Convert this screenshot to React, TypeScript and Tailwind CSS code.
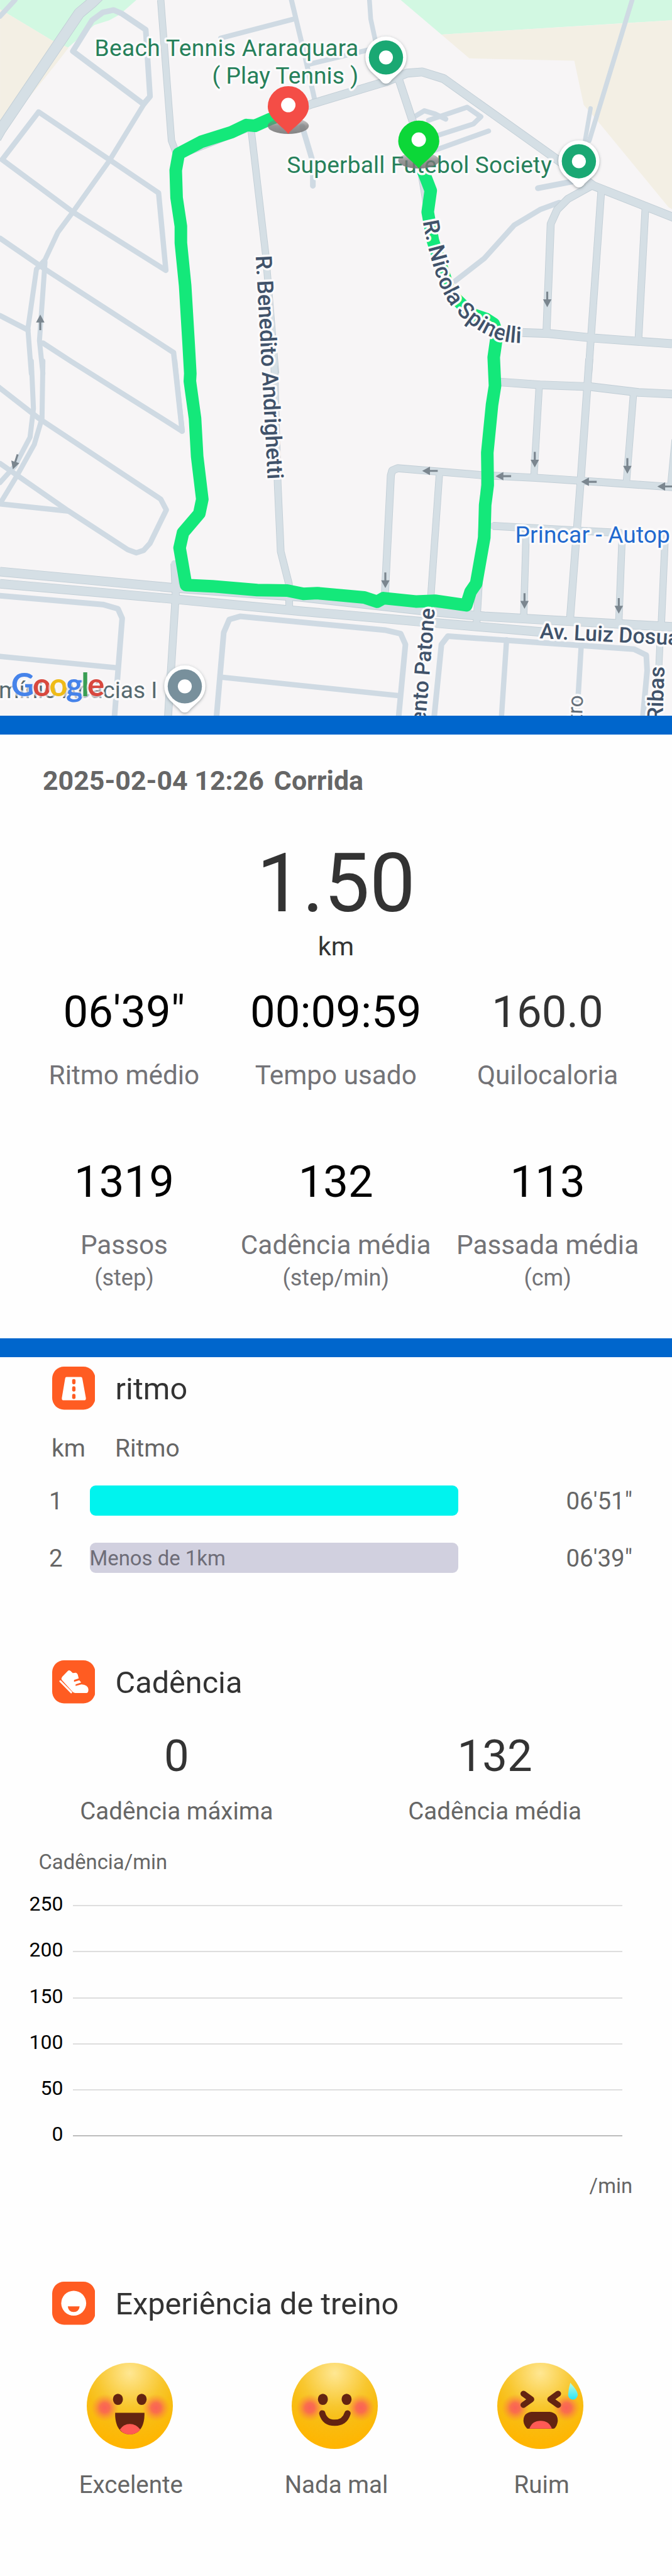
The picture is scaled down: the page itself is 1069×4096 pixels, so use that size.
import React from "react";

const MINOR = "#cfdae3";
const MAIN = "#d5dfe5";
const CASING = "#c2ced6";

type Road = { p: string; w: number };

const upperMinor: Road[] = [
  { p: "215,85 240,52 265,42 285,58 340,125 350,405 335,437 170,215 215,85", w: 9 },
  { p: "340,425 255,675 170,890 135,975 105,1090 85,1130 65,1380 73,1568", w: 8 },
  { p: "105,1100 92,1430 100,1568", w: 8 },
  { p: "90,470 255,670 370,810 387,1135 170,890 5,670 90,470", w: 8.5 },
  { p: "0,1000 105,1130 405,1480 425,1810", w: 8.5 },
  { p: "0,1325 65,1385", w: 8.5 },
  { p: "100,1440 165,1516 425,1810", w: 8.5 },
  { p: "35,0 0,68", w: 8 },
  { p: "680,0 712,240 735,425", w: 8 },
  { p: "515,160 685,80", w: 8 },
  { p: "720,270 870,205", w: 8 },
  { p: "862,0 865,80 877,180", w: 7.5 },
  { p: "965,492 990,465 1015,478 1040,500", w: 8 },
  { p: "1000,505 1090,450 1122,490 1105,520 1010,575", w: 8 },
  { p: "1000,640 1140,550", w: 8 },
  { p: "705,530 730,680 730,780", w: 9 },
  { p: "1475,0 1375,590", w: 7.5 },
  { p: "1378,455 1365,590", w: 7 },
  { p: "1255,790 1350,757", w: 9 },
  { p: "1305,850 1260,880 1200,945 1130,1085 1062,1180", w: 8.5 },
];
const upperMain: Road[] = [
  { p: "232,-20 215,10 185,55 0,548 -10,580", w: 18 },
  { p: "375,0 400,590 415,660", w: 11.5 },
  { p: "585,530 620,1070 643,1568", w: 11.5 },
  { p: "930,330 965,520 1000,900", w: 13 },
  { p: "1380,780 1325,835 1300,880 1285,940 1275,1400", w: 12.5 },
  { p: "1403,800 1373,1568", w: 12 },
  { p: "1506,870 1490,1415", w: 12 },
  { p: "1150,1392 1280,1400 1390,1420 1568,1443", w: 14 },
  { p: "415,650 585,530 730,435 900,343 950,307 985,302 1035,330 1300,670 1385,780 1575,915", w: 14 },
];
const lowerMinor: Road[] = [
  { p: "-10,100 90,240 375,580 388,625 350,765 335,795 318,805 298,792 160,630 0,430", w: 8.5 },
  { p: "73,0 78,200 70,320 35,440 0,510", w: 8 },
  { p: "100,0 98,240 80,350 40,480 3,590", w: 8 },
  { p: "408,0 425,290", w: 8 },
  { p: "0,600 160,630", w: 8.5 },
  { p: "0,985 240,1022 275,1040 285,1080 267,1495", w: 9 },
  { p: "0,1240 275,1288", w: 8.5 },
  { p: "505,1495 522,1140 535,1085 560,1072 900,1130 935,1145 946,1190 930,1495", w: 9 },
  { p: "520,1328 932,1405", w: 8.5 },
  { p: "1013,1495 1030,1190 1045,1155 1480,1210 1508,1235 1510,1300 1500,1495", w: 9 },
  { p: "1182,1170 1170,1495", w: 8.5 },
  { p: "1356,1200 1346,1495", w: 8.5 },
];
const lowerMain: Road[] = [
  { p: "640,20 648,520 655,800 674,935 675,1035", w: 12 },
  { p: "1165,88 1260,100 1380,108 1490,132 1575,139", w: 13.5 },
  { p: "1258,110 1246,480", w: 11.5 },
  { p: "1478,140 1462,500", w: 11.5 },
  { p: "1575,330 1565,520", w: 11 },
  { p: "898,985 912,480 915,460 928,450 1130,480 1250,490 1400,508 1575,530", w: 12.5 },
  { p: "1025,480 1005,995", w: 11.5 },
  { p: "1132,480 1112,1100", w: 12 },
  { p: "1150,692 1450,722", w: 12.5 },
  { p: "1228,700 1222,1070", w: 11.5 },
  { p: "1452,720 1444,1090", w: 11.5 },
  { p: "1552,740 1543,1110", w: 11.5 },
  { p: "1540,1180 1532,1495", w: 11 },
  { p: "0,884 410,953 700,990 1000,1050 1130,1072 1575,1117", w: 15 },
  { p: "0,935 410,1000 700,1050 1050,1105 1300,1143", w: 15 },
  { p: "407,850 410,980 392,1495", w: 12.5 },
  { p: "1375,-10 1355,500 1330,1085", w: 12.5 },
];

const ROUTE =
  "M665,478 L630,500 595,528 575,525 540,555 470,595 417,645 410,715 412,830 422,950 422,1020 432,1200 440,1440 444,1568 443,1600 455,1756 460,1916 472,2096 465,2156 427,2236 419,2300 434,2456 495,2461 600,2477 670,2479 708,2493 740,2490 850,2508 880,2526 895,2511 970,2525 1015,2522 1088,2541 1098,2484 1111,2450 1130,2256 1132,2120 1138,2036 1137,1900 1148,1700 1155,1620 1152,1500 1160,1400 1152,1360 1135,1340 1100,1318 1050,1230 1010,1010 998,890 1005,800 990,730 980,690";

function Roads({ minor, main }: { minor: Road[]; main: Road[] }) {
  const base = {
    fill: "none",
    vectorEffect: "non-scaling-stroke" as const,
    strokeLinejoin: "round" as const,
  };
  return (
    <>
      {minor.map((r) => (
        <polyline key={r.p} points={r.p} stroke={MINOR} strokeWidth={r.w} strokeLinecap="round" {...base} />
      ))}
      {main.map((r) => (
        <polyline key={r.p} points={r.p} stroke={CASING} strokeWidth={r.w} {...base} />
      ))}
      {main.map((r) => (
        <polyline key={"f" + r.p} points={r.p} stroke={MAIN} strokeWidth={r.w - 1.8} strokeLinecap="round" {...base} />
      ))}
    </>
  );
}

function Poi({ x, y, color }: { x: number; y: number; color: string }) {
  return (
    <g transform={`translate(${x} ${y})`}>
      <path
        d="M0 42 C-4 42 -6 40 -9 36 L-24 22 A33 33 0 1 1 24 22 L9 36 C6 40 4 42 0 42Z"
        fill="#fff"
        filter="url(#soft)"
      />
      <circle r="27.5" fill={color} />
      <circle r="11.2" fill="#fff" />
    </g>
  );
}

function Marker({ x, y, color }: { x: number; y: number; color: string }) {
  return (
    <g transform={`translate(${x} ${y})`}>
      <ellipse cx="0" cy="31" rx="33" ry="13" fill="url(#shade)" />
      <path d="M0 44 C-8 32 -33 20 -33 0 A33 33 0 1 1 33 0 C33 20 8 32 0 44Z" fill={color} />
      <circle cy="-2.5" r="11.6" fill="#fff" />
    </g>
  );
}

const arrows = [
  [879.5, 481, 90],
  [64.7, 518, -90],
  [24.5, 742, 108],
  [691, 756.5, 180],
  [809, 765, 180],
  [946.5, 774, 180],
  [1069, 781.5, 180],
  [859.5, 738.5, 90],
  [1008.3, 748.5, 90],
  [619.3, 932.3, 90],
  [843, 965.5, 90],
  [994.5, 973.3, 90],
];

function RouteMap() {
  const halo = { stroke: "#fbfafb", strokeWidth: 7, paintOrder: "stroke" as const, strokeLinejoin: "round" as const };
  return (
    <svg viewBox="0 0 1080 1150" className="block h-[1138.2px] w-full bg-[#f7f5f6] font-[Roboto,sans-serif]">
      <defs>
        <filter id="soft" x="-30%" y="-30%" width="160%" height="160%">
          <feDropShadow dx="0" dy="1.5" stdDeviation="2" floodColor="#3c4a50" floodOpacity="0.5" />
        </filter>
        <linearGradient id="shade" x1="0" y1="0" x2="0" y2="1">
          <stop offset="0" stopColor="#777" stopOpacity="0.25" />
          <stop offset="0.5" stopColor="#777" stopOpacity="0.75" />
          <stop offset="1" stopColor="#777" stopOpacity="0.9" />
        </linearGradient>
        <path id="nicola" d="M677 345 L680 358 Q686 392 695 423 Q705 460 720 484 Q734 505 757 522 Q785 543 813 549 Q830 552 860 551" />
        <path id="benedito" d="M411 411 L431 785" />
        <path id="luiz" d="M867 1025.5 L1300 1047" />
        <path id="patone" d="M672 1300 L699 978" />
      </defs>
      <g transform="scale(0.6888 0.3827)">
        <polygon points="0,0 318,0 280,60 255,85 220,105 155,205 120,168 15,55 0,40" fill="#d2f8e2" />
        <polygon points="0,38 15,55 120,168 160,200 130,270 0,560" fill="#f3efe4" />
        <polygon points="935,0 1030,145 1568,85 1568,0" fill="#d2f8e2" />
        <polygon points="1030,145 1095,245 1340,255 1362,440 1400,520 1560,870 1570,880 1570,85" fill="#f3efe4" />
        <Roads minor={upperMinor} main={upperMain} />
      </g>
      <g transform="translate(0 580) scale(0.6888 0.3827)">
        <Roads minor={lowerMinor} main={lowerMain} />
      </g>
      {arrows.map(([x, y, a]) => (
        <path
          key={x}
          transform={`translate(${x} ${y}) rotate(${a})`}
          d="M-12.5 -1.6H0V-6.8L12.5 0L0 6.8V1.6H-12.5Z"
          fill="#7b868f"
        />
      ))}
      <path
        d={ROUTE}
        transform="scale(0.6888 0.3827)"
        fill="none"
        stroke="#14e87a"
        strokeWidth="20"
        strokeLinejoin="round"
        vectorEffect="non-scaling-stroke"
      />
      <g fontSize="37.5" fill="#26805a" {...halo}>
        <text x="152" y="90" textLength="424">Beach Tennis Araraquara</text>
        <text x="341" y="134" textLength="235">( Play Tennis )</text>
        <text x="461" y="278" textLength="426">Superball Futebol Society</text>
        <text x="828" y="871.5" fill="#2169cf" textLength="249">Princar - Autop</text>
      </g>
      <g fontSize="36" fontWeight="500" fill="#40526a" {...halo}>
        <text textLength="276"><textPath href="#nicola" startOffset="11">R. Nicola Spinelli</textPath></text>
        <text textLength="360"><textPath href="#benedito">R. Benedito Andrighetti</textPath></text>
        <text fontSize="34.5"><textPath href="#luiz">Av. Luiz Dosualdo</textPath></text>
        <text fontSize="34.3" textAnchor="end"><textPath href="#patone" startOffset="100%">Sarmento Patone</textPath></text>
        <text transform="translate(1068 1071) rotate(-88)" textAnchor="end" fontSize="35">Ribas</text>
        <text transform="translate(937 1117) rotate(-88)" textAnchor="end" fontSize="34" fontWeight="400" fill="#66707a">Castro</text>
      </g>
      <text x="253" y="1122" textAnchor="end" fontSize="37.5" fill="#56696f" {...halo}>Condomínio Acácias I</text>
      <Poi x={620.3} y={92.3} color="#1aa873" />
      <Poi x={930.4} y={259.1} color="#1aa873" />
      <Poi x={297} y={1102.7} color="#78909c" />
      <Marker x={463.3} y={171.3} color="#f44d46" />
      <Marker x={673} y={226.8} color="#0cd738" />
      <text
        x="18"
        y="1118"
        fontSize="51.5"
        fontWeight="700"
        textLength="150"
        className="font-[Lato,sans-serif]"
        stroke="#f7f5f6"
        strokeOpacity="0.65"
        strokeWidth="6"
        strokeLinejoin="round"
        paintOrder="stroke"
      >
        <tspan fill="#4683ea">G</tspan>
        <tspan fill="#d8483e">o</tspan>
        <tspan fill="#efbb18">o</tspan>
        <tspan fill="#4683ea">g</tspan>
        <tspan fill="#3a9e54">l</tspan>
        <tspan fill="#d8483e">e</tspan>
      </text>
    </svg>
  );
}

function Stat({ value, label, unit, muted }: { value: string; label: string; unit?: string; muted?: boolean }) {
  return (
    <div className="flex flex-col items-center whitespace-nowrap">
      <div className={`h-20 pt-px text-[70.7px] leading-20 ${muted ? "text-[#333]" : "text-black"}`}>{value}</div>
      <div className="mt-[36.5px] text-[42.3px] leading-[51px] text-[#737377]">{label}</div>
      {unit && <div className="mt-[5px] text-[36px] leading-[45px] text-[#737377]">{unit}</div>}
    </div>
  );
}

function SectionTitle({ icon, children }: { icon: React.ReactNode; children: React.ReactNode }) {
  return (
    <div className="flex h-[68px] items-center gap-[32.5px] pl-[82.6px]">
      <svg viewBox="0 0 69 69" className="size-[68.5px] shrink-0">
        <rect width="69" height="69" rx="19" fill="#ff5c22" />
        {icon}
      </svg>
      <h2 className="pt-[3px] text-[48.6px] leading-[68px] text-[#333]">{children}</h2>
    </div>
  );
}

const roadIcon = (
  <>
    <path d="M23 16.5H46Q48 16.5 48.3 19L54 50Q54.5 54 51 54H18.5Q15 54 15.5 50L20.8 19Q21 16.5 23 16.5Z" fill="#fff" />
    <g fill="#ff5c22">
      <rect x="32" y="20" width="5.4" height="8.5" rx="2.5" />
      <rect x="32" y="31.5" width="5.4" height="8.5" rx="2.5" />
      <rect x="32" y="43.5" width="5.4" height="8.5" rx="2.5" />
    </g>
  </>
);

const shoeIcon = (
  <>
    <path
      d="M25 17Q27 15 29.5 17L33 20.5L38 20Q40 20.5 41 23L42.5 29L35 31.5V34.5L43.5 32L46.5 35.5L37.5 38.5V41L47 38.5Q57 39.5 58 46Q58.5 52 55 52.5H37Q34 52 32 49.5L15.5 31.5Q14 29 16 26.5Z"
      fill="#fff"
    />
    <path d="M13 33.5L30.5 51.2" stroke="#fff" strokeWidth="3" strokeLinecap="round" />
  </>
);

const smileIcon = (
  <>
    <circle cx="34.5" cy="34.5" r="20" fill="#fff" />
    <path d="M25 39.5H44Q43 48.5 34.5 48.5Q26 48.5 25 39.5Z" fill="#ff5c22" />
  </>
);

function PaceRow({ km, pace, bar, note }: { km: string; pace: string; bar: string; note?: string }) {
  return (
    <div className="flex h-12 items-center pr-[63px] pl-[78px] text-[38.5px] text-[#666]">
      <span className="w-[64.5px] pt-0.5 leading-12">{km}</span>
      <div className={`h-[48px] w-[586px] rounded-[9px] text-[32.9px] leading-[50px] text-[#6e6d78] ${bar}`}>{note}</div>
      <span className="ml-auto pt-0.5 leading-12">{pace}</span>
    </div>
  );
}

type Mood = "great" | "fine" | "bad";

function Face({ mood, label }: { mood: Mood; label: string }) {
  const brown = "#642411";
  return (
    <div className="flex flex-col items-center">
      <svg viewBox="0 0 138 138" className="size-[137px]">
        <defs>
          <radialGradient id={mood + "skin"} cx="0.5" cy="0.12" r="0.85">
            <stop offset="0" stopColor="#ffe793" />
            <stop offset="0.45" stopColor="#f8c72f" />
            <stop offset="0.65" stopColor="#f8bd14" />
            <stop offset="1" stopColor="#ffb500" />
          </radialGradient>
          <radialGradient id={mood + "blush"}>
            <stop offset="0" stopColor="#fa6157" />
            <stop offset="0.35" stopColor="#fa6652" stopOpacity="0.9" />
            <stop offset="1" stopColor="#fb9030" stopOpacity="0" />
          </radialGradient>
        </defs>
        <circle cx="69" cy="69" r="69" fill={`url(#${mood}skin)`} />
        <circle cx="29" cy="72" r="22" fill={`url(#${mood}blush)`} />
        <circle cx="111" cy="72" r="22" fill={`url(#${mood}blush)`} />
        {mood !== "bad" && (
          <g fill={brown}>
            <ellipse cx="50" cy="58.5" rx="8" ry="9" />
            <ellipse cx="88" cy="58.5" rx="8" ry="9" />
          </g>
        )}
        {mood === "great" && (
          <>
            <path d="M45.5 80H92.5C93 102 84 114.5 69 114.5S45 102 45.5 80Z" fill={brown} />
            <path d="M53 107Q59 98 69 98T86 107Q79 114.8 69 114.8T53 107Z" fill="#ff5a55" />
          </>
        )}
        {mood === "fine" && (
          <path d="M49 81Q53 96 69 96T89.5 81" fill="none" stroke={brown} strokeWidth="10" strokeLinecap="round" />
        )}
        {mood === "bad" && (
          <>
            <path
              d="M42 49.5L54.5 58.5L42 67.5M97.5 49.5L85 58.5L97.5 67.5"
              fill="none"
              stroke={brown}
              strokeWidth="9.5"
              strokeLinecap="round"
              strokeLinejoin="round"
            />
            <path d="M55 78.5H84Q97 80 97 93Q96 102 91 105.5H48Q42.5 100 42 93Q42 80 55 78.5Z" fill={brown} />
            <path d="M51.5 105.5Q56 93 69.5 93T87.5 105.5Z" fill="#ff5a55" />
            <path d="M117 32Q130 46 129 52Q127 59 121 59Q114 58 113.5 51Q114 42 117 32Z" fill="url(#drop)" />
            <linearGradient id="drop" x1="0" y1="0" x2="0" y2="1">
              <stop offset="0" stopColor="#b9fbe2" />
              <stop offset="1" stopColor="#29e6fa" />
            </linearGradient>
          </>
        )}
      </svg>
      <div className="mt-[33px] pl-1 text-[38.5px] leading-12 text-[#666]">{label}</div>
    </div>
  );
}

export default function App() {
  return (
    <main className="flex h-[4096px] w-[1069px] flex-col overflow-hidden bg-[#fefefe] font-[Roboto,sans-serif]">
      <RouteMap />
      <div className="h-[29.7px] shrink-0 bg-[#0066cc]" />

      <section className="h-[960.1px] shrink-0 pt-[45px]">
        <h1 className="flex gap-[16px] pl-[68px] text-[42.9px] leading-[57px] font-bold text-[#666]">
          <span>2025-02-04 12:26</span>
          <span>Corrida</span>
        </h1>
        <div className="mt-[65px] text-center text-[129.5px] leading-[140px] text-[#333]">1.50</div>
        <div className="mt-[5px] text-center text-[41.5px] leading-[50px] text-[#333]">km</div>
        <div className="mt-[38px] grid grid-cols-3 gap-y-[102.5px] pr-[29.5px] pl-[29px]">
          <Stat value={`06'39"`} label="Ritmo médio" />
          <Stat value="00:09:59" label="Tempo usado" />
          <Stat value="160.0" label="Quilocaloria" muted />
          <Stat value="1319" label="Passos" unit="(step)" />
          <Stat value="132" label="Cadência média" unit="(step/min)" />
          <Stat value="113" label="Passada média" unit="(cm)" />
        </div>
      </section>

      <div className="h-[29.7px] shrink-0 bg-[#0066cc]" />

      <section className="pt-[15.8px]">
        <SectionTitle icon={roadIcon}>ritmo</SectionTitle>
        <div className="mt-[38.2px] flex pl-[82px] text-[39px] leading-[46px] text-[#666]">
          <span className="w-[101px]">km</span>
          <span>Ritmo</span>
        </div>
        <div className="mt-9 flex flex-col gap-[43px]">
          <PaceRow km="1" pace={`06'51"`} bar="bg-[#00f3ee]" />
          <PaceRow km="2" pace={`06'39"`} bar="bg-[#d1d0df]" note="Menos de 1km" />
        </div>
      </section>

      <section className="pt-[140px]">
        <SectionTitle icon={shoeIcon}>Cadência</SectionTitle>
        <div className="mt-[43.5px] grid grid-cols-2 pr-[28.8px] pl-[27.8px] text-center">
          <div>
            <div className="text-[70.7px] leading-20 text-[#333]">0</div>
            <div className="mt-[24px] text-[38.5px] leading-12 text-[#666]">Cadência máxima</div>
          </div>
          <div>
            <div className="text-[70.7px] leading-20 text-[#333]">132</div>
            <div className="mt-[24px] text-[38.5px] leading-12 text-[#666]">Cadência média</div>
          </div>
        </div>
        <div className="mt-[37px] pl-[61.5px] text-[32.8px] leading-10 text-[#666]">Cadência/min</div>
        <div className="mt-[9.4px] pr-[79px]">
          {[250, 200, 150, 100, 50, 0].map((tick) => (
            <div key={tick} className="flex h-[73.2px] items-center gap-[15.5px]">
              <span className="w-[100.5px] text-right text-[32px] leading-10 text-black">{tick}</span>
              <span className={`mt-1.5 h-0.5 flex-1 ${tick === 0 ? "bg-[#bcbcbc]" : "bg-[#dedede]"}`} />
            </div>
          ))}
        </div>
        <div className="mt-[26.8px] pr-[63px] text-right text-[32.8px] leading-10 text-[#666]">/min</div>
      </section>

      <section className="pt-[132px]">
        <SectionTitle icon={smileIcon}>Experiência de treino</SectionTitle>
        <div className="mt-[61px] grid grid-cols-3 pr-[46px] pl-[43px]">
          <Face mood="great" label="Excelente" />
          <Face mood="fine" label="Nada mal" />
          <Face mood="bad" label="Ruim" />
        </div>
      </section>
    </main>
  );
}
